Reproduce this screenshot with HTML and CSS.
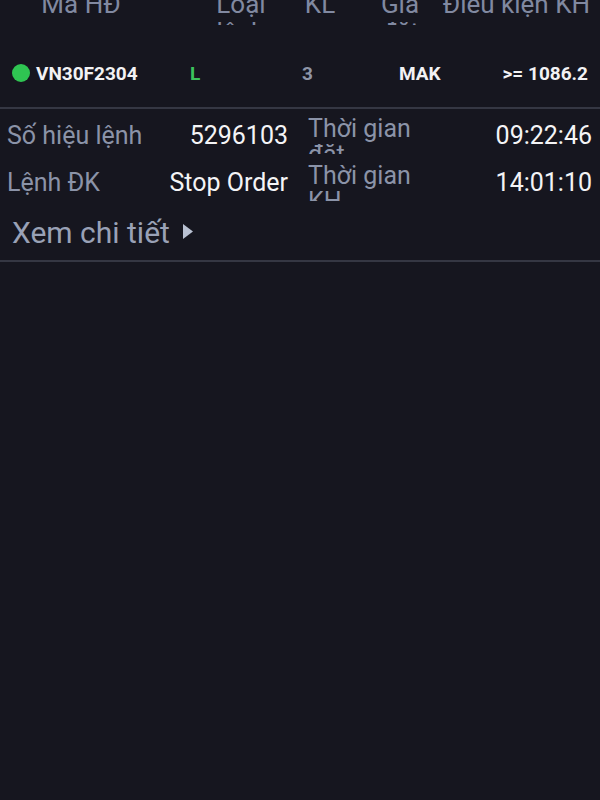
FILE: index.html
```html
<!DOCTYPE html>
<html lang="vi">
<head>
<meta charset="utf-8">
<title>Lệnh điều kiện</title>
<link rel="stylesheet" href="styles.css">
</head>
<body>
<div class="screen">
  <div class="thead">
    <div class="th th-ma">Mã HĐ</div>
    <div class="th th-loai">Loại lệnh</div>
    <div class="th th-kl">KL</div>
    <div class="th th-gia">Giá đặt</div>
    <div class="th th-dk">Điều kiện KH</div>
  </div>
  <div class="order">
    <div class="row-main">
      <div class="td td-ma"><span class="dot"></span>VN30F2304</div>
      <div class="td td-loai">L</div>
      <div class="td td-kl">3</div>
      <div class="td td-gia">MAK</div>
      <div class="td td-dk">&gt;= 1086.2</div>
    </div>
  </div>
  <div class="details">
    <div class="drow">
      <div class="dlabel">Số hiệu lệnh</div>
      <div class="dvalue">5296103</div>
      <div class="dlabel dlabel-wrap">Thời gian đặt</div>
      <div class="dvalue">09:22:46</div>
    </div>
    <div class="drow">
      <div class="dlabel">Lệnh ĐK</div>
      <div class="dvalue">Stop Order</div>
      <div class="dlabel dlabel-wrap">Thời gian KH</div>
      <div class="dvalue">14:01:10</div>
    </div>
    <div class="more">
      <span class="more-text">Xem chi tiết</span>
      <svg class="more-arrow" width="10" height="15" viewBox="0 0 10 15"><path d="M0 0 L10 7.5 L0 15 Z" fill="#b9c1d2"/></svg>
    </div>
  </div>
</div>
</body>
</html>
```
FILE: styles.css
```css
html, body {
  margin: 0;
  padding: 0;
  background: #16161f;
}
body {
  font-family: Roboto, "Noto Sans", "Liberation Sans", sans-serif;
  color: #f2f2f4;
  width: 600px;
  height: 800px;
  overflow: hidden;
}
.screen {
  width: 600px;
}
.thead {
  display: flex;
  margin-top: -10px;
  height: 35px;
  overflow: hidden;
}
.th {
  font-size: 26px;
  line-height: 28px;
  color: #8189a1;
  text-align: center;
}
.th-ma { width: 162px; }
.th-loai { width: 98px; margin-left: 30px; }
.th-kl { width: 60px; }
.th-gia { width: 70px; margin-left: 15px; }
.th-dk { flex: 1; text-align: right; padding-right: 10px; white-space: nowrap; }

.order {
  border-bottom: 2px solid #353743;
}
.row-main {
  display: flex;
  align-items: center;
  padding-top: 14px;
  height: 68px;
  font-size: 19px;
  font-weight: 700;
}
.td { white-space: nowrap; }
.td-ma {
  width: 178px;
  padding-left: 12px;
  display: flex;
  align-items: center;
  gap: 6px;
}
.dot {
  width: 18px;
  height: 18px;
  border-radius: 50%;
  background: #2fc552;
}
.td-loai { width: 112px; color: #3cc35c; }
.td-kl { width: 97px; color: #8e95a8; }
.td-gia { flex: 1; color: #f2f2f4; }
.td-dk { padding-right: 12px; color: #f2f2f4; }

.details {
  padding-top: 3px;
  border-bottom: 2px solid #353743;
}
.drow {
  display: grid;
  grid-template-columns: 153px 128px 152px 1fr;
  padding-left: 7px;
  padding-right: 8px;
  height: 47px;
  font-size: 25px;
}
.dlabel {
  color: #8b93a8;
  line-height: 47px;
  white-space: nowrap;
}
.dvalue {
  color: #f4f4f6;
  line-height: 47px;
  text-align: right;
  white-space: nowrap;
}
.dlabel-wrap {
  white-space: normal;
  line-height: 26px;
  margin-top: 4px;
  margin-left: 20px;
  height: 38px;
  overflow: hidden;
  width: 132px;
}
.more {
  display: flex;
  align-items: center;
  gap: 13px;
  padding: 0 0 9px 12px;
  margin-top: 9px;
  height: 36px;
}
.more-text {
  font-size: 30px;
  line-height: 36px;
  color: #99a1b6;
}
.more-arrow {
  margin-top: -3px;
}
```
